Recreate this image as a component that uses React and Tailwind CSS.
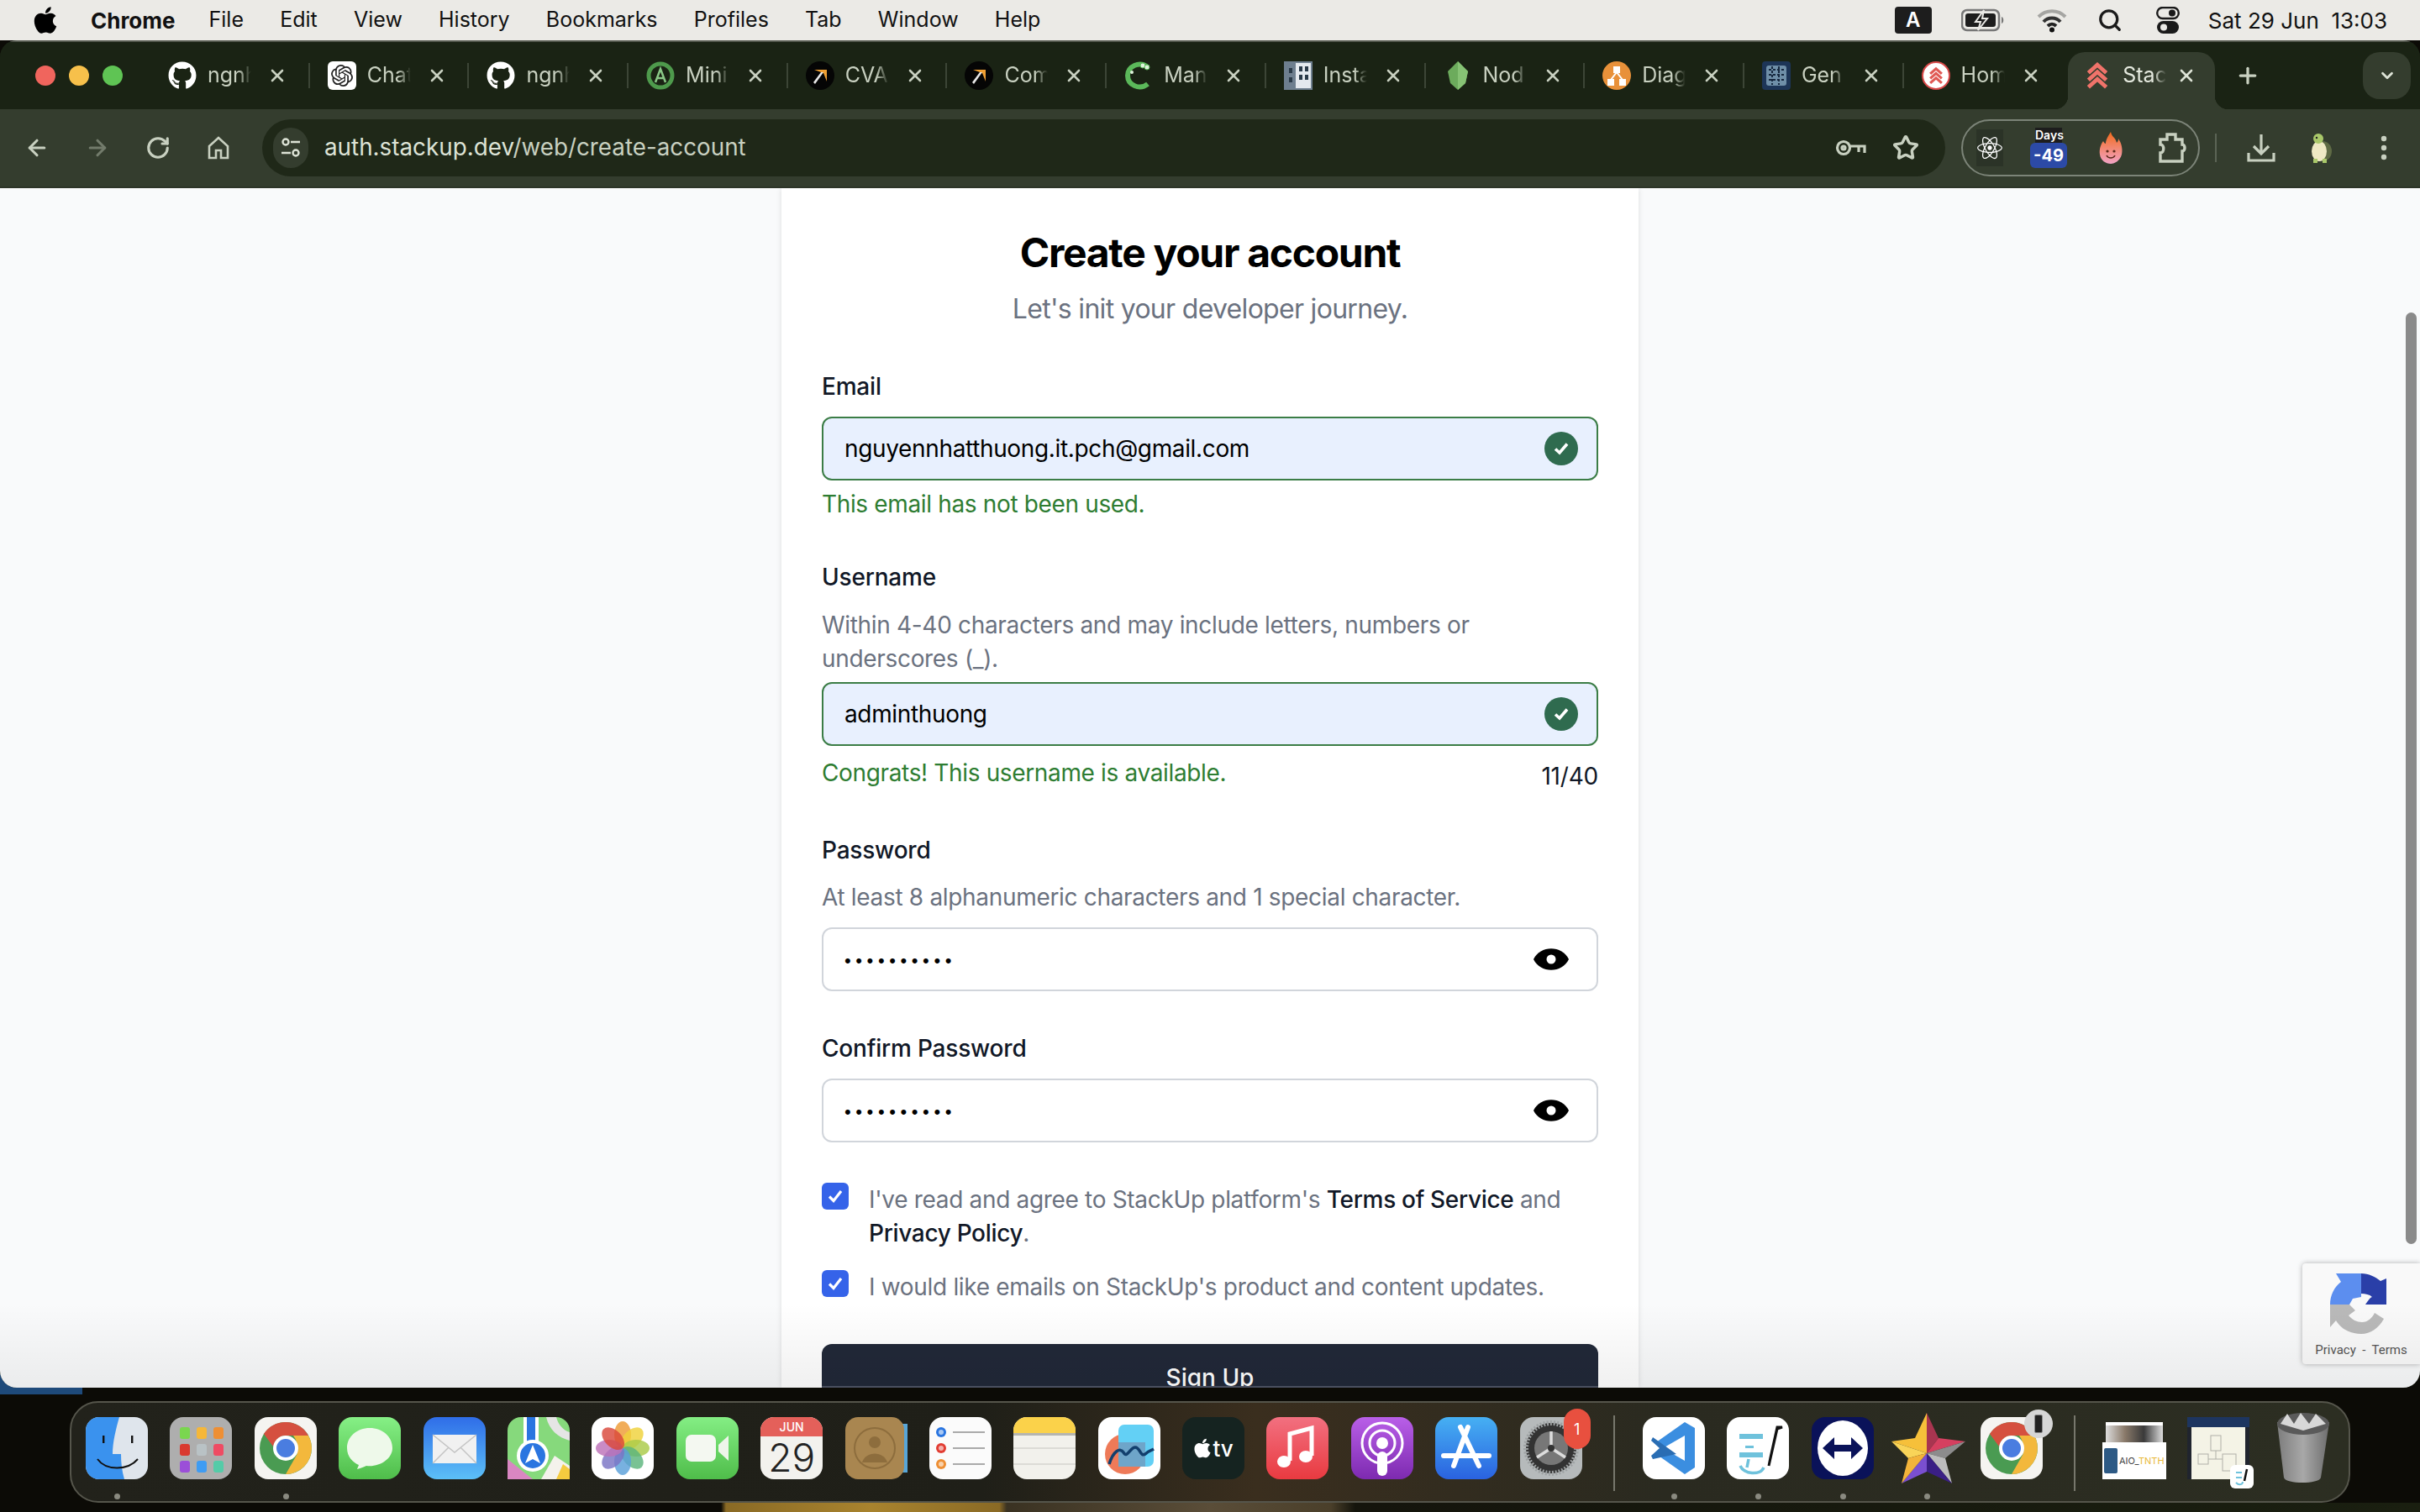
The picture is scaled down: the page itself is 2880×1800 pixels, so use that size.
import React from "react";
import { FaApple, FaGithub, FaReact } from "react-icons/fa";
import { SiOpenai } from "react-icons/si";
import { ArrowLeft, ArrowRight, RotateCw, Star, Plus, X, ChevronDown, Search } from "lucide-react";

const Chevrons = ({ c = "#f0736a", size = 34 }) => (
  <svg width={size} height={size} viewBox="0 0 32 32" fill="none" stroke={c} strokeWidth="4.5">
    <path d="M6 13 L16 4 L26 13" />
    <path d="M6 21 L16 12 L26 21" />
    <path d="M6 29 L16 20 L26 29" />
  </svg>
);

const favs = {
  github: <FaGithub className="w-[34px] h-[34px] text-white" />,
  gpt: <span className="w-[34px] h-[34px] rounded-[6px] bg-white flex items-center justify-center"><SiOpenai className="w-[26px] h-[26px] text-[#222]" /></span>,
  mini: (
    <svg width="34" height="34" viewBox="0 0 34 34" fill="none">
      <circle cx="17" cy="17" r="14" stroke="#4e9a4c" strokeWidth="5" />
      <path d="M11 25 L17 9 L23 25 M13 20 H21" stroke="#8ac887" strokeWidth="2.5" />
    </svg>
  ),
  cvat: (
    <svg width="34" height="34" viewBox="0 0 34 34">
      <circle cx="17" cy="17" r="17" fill="#050505" />
      <path d="M10 10 H25 V24 L21 14 Z" fill="#f0a033" />
      <path d="M21 13 L11 27 L9 25 L18 13 Z" fill="#e8e8e8" />
    </svg>
  ),
  man: (
    <svg width="34" height="34" viewBox="0 0 34 34" fill="none">
      <path d="M28 7 C18 -1 4 6 4 17 C4 28 18 35 28 27" stroke="#5bb85a" strokeWidth="6" />
      <circle cx="22" cy="5" r="3" fill="#dff3dc" stroke="#5bb85a" />
      <circle cx="27" cy="7" r="3" fill="#dff3dc" stroke="#5bb85a" />
      <circle cx="9" cy="13" r="2" fill="#dff3dc" />
    </svg>
  ),
  insta: (
    <svg width="34" height="34" viewBox="0 0 34 34">
      <rect width="34" height="34" fill="#6e7f8f" />
      <rect x="14" y="2" width="18" height="30" fill="#e4e9ee" />
      <rect x="6" y="8" width="4" height="6" fill="#2a3a48" />
      <rect x="6" y="19" width="4" height="6" fill="#2a3a48" />
      <rect x="18" y="6" width="4" height="6" fill="#2a3a48" />
      <rect x="25" y="6" width="4" height="6" fill="#2a3a48" />
      <rect x="18" y="16" width="4" height="6" fill="#2a3a48" />
      <rect x="25" y="16" width="4" height="6" fill="#2a3a48" />
    </svg>
  ),
  node: (
    <svg width="34" height="34" viewBox="0 0 34 34">
      <path d="M17 0 L29 12 L26 26 L17 34 L8 26 L5 12 Z" fill="#6cab5c" />
      <path d="M17 0 L29 12 L26 26 L17 34 Z" fill="#86c274" />
    </svg>
  ),
  diag: (
    <svg width="34" height="34" viewBox="0 0 34 34">
      <circle cx="17" cy="17" r="17" fill="#e8913a" />
      <rect x="13" y="6" width="8" height="8" fill="#fff" />
      <rect x="6" y="21" width="8" height="8" fill="#fff" />
      <rect x="20" y="21" width="8" height="8" fill="#fff" />
      <path d="M17 13 L10 22 M17 13 L24 22" stroke="#fff" strokeWidth="2" />
    </svg>
  ),
  gen: (
    <svg width="34" height="34" viewBox="0 0 34 34">
      <rect width="34" height="34" rx="4" fill="#1d3557" />
      <rect x="5" y="5" width="24" height="24" rx="3" fill="#6f8fa8" />
      <path d="M8 10 H26 M8 16 H26 M8 22 H26 M12 6 V28 M20 6 V28" stroke="#16283f" strokeWidth="2" strokeDasharray="3 2" />
    </svg>
  ),
  hom: <span className="w-[34px] h-[34px] rounded-full bg-white border-2 border-[#d94a4a] flex items-center justify-center"><Chevrons size={22} c="#e05a55" /></span>,
  stack: <Chevrons />,
};

const tabs = [
  ["github", "ngnh"],
  ["gpt", "Chat"],
  ["github", "ngnh"],
  ["mini", "Mini"],
  ["cvat", "CVA"],
  ["cvat", "Com"],
  ["man", "Man"],
  ["insta", "Insta"],
  ["node", "Nod"],
  ["diag", "Diag"],
  ["gen", "Gen"],
  ["hom", "Hom"],
];

const fadeCls = "ml-[13px] w-[54px] whitespace-nowrap text-[25px] [mask-image:linear-gradient(to_right,#000_68%,transparent_96%)]";

function Tab({ icon, title, last }) {
  return (
    <div className="relative flex items-center w-[189.7px] h-[56px] pl-[21px] shrink-0">
      <span className="w-[34px] h-[34px] shrink-0 flex items-center justify-center">{favs[icon]}</span>
      <span className={`${fadeCls} text-[#c8d0c0]`}>{title}</span>
      <X className="ml-[17px] w-[24px] h-[24px] text-[#c8d0c0]" strokeWidth={2.6} />
      {!last && <span className="absolute right-0 top-[13px] w-[2px] h-[30px] bg-[#3c4536]" />}
    </div>
  );
}

function MenuBar() {
  const items = ["File", "Edit", "View", "History", "Bookmarks", "Profiles", "Tab", "Window", "Help"];
  return (
    <div className="h-[48px] bg-[#ebeae6] flex items-center text-[25px] text-[#111] shrink-0 pl-[38px] pr-[39px]">
      <FaApple className="w-[32px] h-[36px] text-black" />
      <span className="ml-[38px] font-bold text-[26px]">Chrome</span>
      <div className="flex ml-[40px] gap-[43.2px]">
        {items.map((m) => <span key={m}>{m}</span>)}
      </div>
      <div className="ml-auto flex items-center">
        <span className="w-[44px] h-[32px] rounded-[4px] bg-[#1d1d1d] text-white text-[24px] font-semibold flex items-center justify-center">A</span>
        <svg className="ml-[35px]" width="52" height="28" viewBox="0 0 52 28" fill="none">
          <rect x="1" y="2" width="44" height="24" rx="6" stroke="#777" strokeWidth="2.5" />
          <rect x="5" y="6" width="36" height="16" rx="3" fill="#1d1d1d" />
          <path d="M27 2 L17 16 H23 L20 26 L31 12 H25 Z" fill="#1d1d1d" stroke="#ebeae6" strokeWidth="2" />
          <path d="M48 10 C51 11 51 17 48 18 Z" fill="#777" />
        </svg>
        <svg className="ml-[38px]" width="36" height="30" viewBox="0 0 36 30" fill="none" strokeWidth="4">
          <path d="M2 11 C11 2 25 2 34 11" stroke="#a5a5a2" />
          <path d="M8 17 C13 11 23 11 28 17" stroke="#333" />
          <path d="M13 22 C16 19 20 19 23 22" stroke="#222" />
          <circle cx="18" cy="26.5" r="3" fill="#111" />
        </svg>
        <Search className="ml-[36px] w-[30px] h-[30px] text-[#1a1a1a]" strokeWidth={2.6} />
        <svg className="ml-[40px]" width="28" height="32" viewBox="0 0 28 32">
          <rect x="1.2" y="1" width="25.6" height="13" rx="6.5" fill="none" stroke="#1a1a1a" strokeWidth="2.4" />
          <circle cx="19" cy="7.5" r="4" fill="#1a1a1a" />
          <rect x="1" y="17" width="26" height="15" rx="7.5" fill="#1a1a1a" />
          <circle cx="9" cy="24.5" r="4" fill="#ebeae6" />
        </svg>
        <span className="ml-[34px] whitespace-pre text-[26px]">Sat 29 Jun  13:03</span>
      </div>
    </div>
  );
}

function TabStrip() {
  return (
    <div className="h-[82px] bg-[#1a2314] flex items-end shrink-0 pl-[42px] border-t-2 border-[#55594f]">
      <div className="flex items-center gap-[16px] h-[68px] pb-[12px] shrink-0">
        <span className="w-[24px] h-[24px] rounded-full bg-[#f0655d]" />
        <span className="w-[24px] h-[24px] rounded-full bg-[#f7c04b]" />
        <span className="w-[24px] h-[24px] rounded-full bg-[#5fc454]" />
      </div>
      <div className="flex items-start h-[68px] ml-[33px]">
        {tabs.map((t, i) => <Tab key={i} icon={t[0]} title={t[1]} last={i === tabs.length - 1} />)}
      </div>
      <div className="relative w-[175px] h-[68px] pb-[12px] bg-[#343d2e] rounded-t-[20px] flex items-center pl-[18px] ml-[6px] shrink-0">
        <span className="absolute left-[-16px] bottom-0 w-[16px] h-[16px] bg-[radial-gradient(circle_at_0_0,transparent_16px,#343d2e_16.5px)]" />
        <span className="absolute right-[-16px] bottom-0 w-[16px] h-[16px] bg-[radial-gradient(circle_at_100%_0,transparent_16px,#343d2e_16.5px)]" />
        <Chevrons />
        <span className={`${fadeCls} text-[#e4e9de]`}>Stac</span>
        <X className="ml-[10px] w-[24px] h-[24px] text-[#dde3d6]" strokeWidth={2.6} />
      </div>
      <div className="h-[68px] pb-[12px] flex items-center ml-[24px]">
        <Plus className="w-[30px] h-[30px] text-[#c8d0c0]" strokeWidth={2.6} />
      </div>
      <div className="mb-[12px] ml-[122px] w-[57px] h-[56px] rounded-[20px] bg-[#343d2e] flex items-center justify-center shrink-0">
        <ChevronDown className="w-[22px] h-[22px] text-[#dde3d6]" strokeWidth={3} />
      </div>
    </div>
  );
}

function Toolbar() {
  return (
    <div className="h-[94px] bg-[#343d2e] border-b-2 border-[#2d3528] flex items-center shrink-0 pl-[29px]">
      <ArrowLeft className="w-[30px] h-[30px] text-[#c8d0c0]" strokeWidth={2.5} />
      <ArrowRight className="ml-[42px] w-[30px] h-[30px] text-[#727b6b]" strokeWidth={2.5} />
      <RotateCw className="ml-[42px] w-[30px] h-[30px] text-[#c8d0c0]" strokeWidth={2.5} />
      <svg className="ml-[42px]" width="30" height="30" viewBox="0 0 30 30" fill="none" stroke="#c8d0c0" strokeWidth="2.6">
        <path d="M4 13 L15 3 L26 13 V27 H18 V18 H12 V27 H4 Z" />
      </svg>
      <div className="ml-[37px] w-[2003px] h-[68px] bg-[#1f2818] rounded-full flex items-center pl-[13px] pr-[31px]">
        <span className="w-[42px] h-[48px] rounded-full bg-[#343d2e] flex items-center justify-center">
          <svg width="26" height="26" viewBox="0 0 26 26" fill="none" stroke="#dde3d6" strokeWidth="2.4">
            <circle cx="7" cy="6" r="3.5" />
            <path d="M13 6 H24 M2 19 H13" />
            <circle cx="19" cy="19" r="3.5" />
          </svg>
        </span>
        <span className="ml-[19px] text-[27.8px] text-[#dde3d6]">auth.stackup.dev<span className="text-[#c8d0c0]">/web/create-account</span></span>
        <svg className="ml-auto" width="38" height="24" viewBox="0 0 38 24" fill="none" stroke="#c8d0c0" strokeWidth="3.2">
          <circle cx="10" cy="12" r="7.5" />
          <circle cx="10" cy="12" r="2" />
          <path d="M17 10 H35 V18 M28 10 V17" />
        </svg>
        <Star className="ml-[30px] w-[32px] h-[32px] text-[#c8d0c0]" strokeWidth={2.6} />
      </div>
      <div className="ml-[19px] w-[284px] h-[68px] rounded-full border-2 border-[#7c8478] flex items-center pl-[16px]">
        <span className="w-[32px] h-[44px] bg-[#2b3327] flex items-center justify-center shrink-0">
          <FaReact className="w-[30px] h-[34px] text-white" />
        </span>
        <div className="ml-[31px] w-[46px] flex flex-col items-center shrink-0">
          <span className="w-[32px] h-[18px] bg-[#1d1d1d] text-white text-[14px] font-semibold leading-[18px] text-center">Days</span>
          <span className="w-[44px] h-[30px] rounded-[6px] bg-[#2c4aa6] text-white text-[20px] font-bold leading-[30px] text-center">-49</span>
        </div>
        <svg className="ml-[36px] shrink-0" width="30" height="38" viewBox="0 0 30 38">
          <defs>
            <linearGradient id="fl" x1="0" y1="0" x2="0" y2="1">
              <stop offset="0" stopColor="#f26a1b" />
              <stop offset="1" stopColor="#f2a3c6" />
            </linearGradient>
          </defs>
          <path d="M15 0 C16 6 21 7 22 13 C24 11 24 9 24 8 C29 15 29 23 28 27 C26 34 20 38 15 38 C9 38 3 34 2 27 C1 21 3 15 6 11 C7 13 8 14 9 14 C9 9 12 5 15 0 Z" fill="url(#fl)" />
          <circle cx="11" cy="23" r="1.6" fill="#5a2a1a" />
          <circle cx="19" cy="23" r="1.6" fill="#5a2a1a" />
          <path d="M10 28 C12 32 18 32 20 28" fill="none" stroke="#5a2a1a" strokeWidth="1.6" />
        </svg>
        <svg className="ml-[41px] shrink-0" width="34" height="36" viewBox="0 0 34 36" fill="none" stroke="#c8d0c0" strokeWidth="3.4">
          <path d="M3 8 H11 V2 H21 V8 H29 V14 C33 14 33 22 29 22 V34 H3 V24 C8 24 8 14 3 14 Z" />
        </svg>
      </div>
      <span className="ml-[18px] w-[2px] h-[34px] bg-[#5b6455]" />
      <svg className="ml-[36px]" width="34" height="36" viewBox="0 0 34 36" fill="none" stroke="#c8d0c0" strokeWidth="3.2">
        <path d="M17 2 V24 M8 16 L17 25 L26 16" />
        <path d="M2 24 V33 H32 V24" />
      </svg>
      <svg className="ml-[38px]" width="30" height="36" viewBox="0 0 30 36">
        <ellipse cx="18" cy="22" rx="11" ry="12" fill="#5f6b45" />
        <ellipse cx="14" cy="22" rx="9" ry="12" fill="#efe9c4" />
        <circle cx="13" cy="7" r="6" fill="#a9c86a" />
        <circle cx="11" cy="6" r="1.2" fill="#222" />
        <rect x="7" y="31" width="5" height="5" fill="#a9c86a" />
        <rect x="18" y="31" width="5" height="5" fill="#a9c86a" />
      </svg>
      <svg className="ml-[57px]" width="8" height="30" viewBox="0 0 8 30" fill="#c8d0c0">
        <circle cx="4" cy="4" r="3.2" /><circle cx="4" cy="15" r="3.2" /><circle cx="4" cy="26" r="3.2" />
      </svg>
    </div>
  );
}

const CheckBadge = () => (
  <span className="w-[40px] h-[40px] rounded-full bg-[#2f6b4f] flex items-center justify-center shrink-0">
    <svg width="20" height="18" viewBox="0 0 20 18" fill="none" stroke="#fff" strokeWidth="3.6">
      <path d="M3 9.5 L8 14 L17 3.5" />
    </svg>
  </span>
);

const Eye = () => (
  <svg width="42" height="28" viewBox="0 0 42 28" className="shrink-0">
    <path d="M0 14 C8 -3 34 -3 42 14 C34 31 8 31 0 14 Z" fill="#000" />
    <circle cx="21" cy="14" r="5.5" fill="#fff" />
  </svg>
);

const labelCls = "block text-[28px] leading-[40px] font-medium tracking-[-0.2px] text-[#111827]";
const helpCls = "text-[28px] leading-[40px] tracking-[-0.32px] text-[#6b7280]";
const okCls = "text-[28px] leading-[40px] tracking-[-0.35px] text-[#2e7d32]";

function OkInput({ value }) {
  return (
    <div className="h-[76px] rounded-[12px] border-2 border-[#3b7d46] bg-[#e8f0fe] flex items-center pl-[25px] pr-[22px] text-[28px] tracking-[-0.35px] text-black">
      <span>{value}</span>
      <span className="ml-auto"><CheckBadge /></span>
    </div>
  );
}

function PwInput() {
  return (
    <div className="h-[76px] rounded-[12px] border-2 border-[#d1d5db] bg-white flex items-center pl-[25px] pr-[33px] text-black">
      <span className="pt-[3px] text-[22px] tracking-[5.6px] font-['Liberation_Sans',sans-serif]">••••••••••</span>
      <span className="ml-auto flex"><Eye /></span>
    </div>
  );
}

const Box = () => (
  <span className="w-[32px] h-[32px] rounded-[6px] bg-[#3563e9] flex items-center justify-center shrink-0">
    <svg width="22" height="20" viewBox="0 0 22 20" fill="none" stroke="#fff" strokeWidth="3.2">
      <path d="M4 10.5 L9 15.5 L18 4" />
    </svg>
  </span>
);

function Page() {
  return (
    <div className="relative flex-1 min-h-0 overflow-hidden bg-[#f9fafb] font-['Inter',sans-serif]">
      <div className="mx-auto w-[1020px] h-full bg-white shadow-[0_0_6px_rgba(0,0,0,0.12)] px-[48px]">
        <h1 className="pt-[47px] text-center text-[48px] leading-[60px] font-bold tracking-[-1.3px] text-black">Create your account</h1>
        <p className="mt-[15px] text-center text-[32px] leading-[44px] tracking-[-0.7px] text-[#6b7280]">Let's init your developer journey.</p>

        <label className={`${labelCls} mt-[50px]`}>Email</label>
        <div className="mt-[16px]"><OkInput value="nguyennhatthuong.it.pch@gmail.com" /></div>
        <p className={`mt-[8px] ${okCls}`}>This email has not been used.</p>

        <label className={`${labelCls} mt-[47px]`}>Username</label>
        <p className={`${helpCls} mt-[17px]`}>Within 4-40 characters and may include letters, numbers or underscores (_).</p>
        <div className="mt-[8px]"><OkInput value="adminthuong" /></div>
        <div className="mt-[12px] flex justify-between items-start">
          <span className={okCls}>Congrats! This username is available.</span>
          <span className="mt-[4px] text-[28px] leading-[40px] tracking-[-0.2px] text-[#111827]">11/40</span>
        </div>

        <label className={`${labelCls} mt-[48px]`}>Password</label>
        <p className={`${helpCls} mt-[16px]`}>At least 8 alphanumeric characters and 1 special character.</p>
        <div className="mt-[16px]"><PwInput /></div>

        <label className={`${labelCls} mt-[48px]`}>Confirm Password</label>
        <div className="mt-[16px]"><PwInput /></div>

        <div className="mt-[48px] flex gap-[24px]">
          <Box />
          <p className={helpCls}>I've read and agree to StackUp platform's <span className="font-medium text-[#111827]">Terms of Service</span> and <span className="font-medium text-[#111827]">Privacy Policy</span>.</p>
        </div>
        <div className="mt-[24px] flex gap-[24px]">
          <Box />
          <p className={helpCls}>I would like emails on StackUp's product and content updates.</p>
        </div>
        <button className="mt-[48px] w-full h-[80px] rounded-[12px] bg-[#212838] text-white text-[28px] font-medium">Sign Up</button>
      </div>

      <div className="absolute right-[4px] top-[148px] w-[13px] h-[1109px] rounded-full bg-[#8a8a8a]" />
      <div className="absolute right-0 bottom-[28px] w-[140px] h-[120px] bg-[#f9f9f9] rounded-l-[4px] shadow-[0_0_6px_rgba(0,0,0,0.3)] flex flex-col items-center">
        <svg className="mt-[12px]" width="74" height="74" viewBox="0 0 74 74">
          <path d="M7 0 L37 0 V28 L27 30 L23 37 H0 C0 26 5 16 13 10 Z" fill="#5c8eef" />
          <path d="M37 0 C46 0 54 4 60 9 L67 6 V37 H42 C45 33 47 29 50 28 C47 25 42 24 37 24 Z" fill="#2a3fa8" />
          <path d="M0 37 H23 L30 44 L22 50 C26 55 32 58 38 58 C45 58 50 53 53 47 L64 54 C58 65 48 72 37 72 C24 72 13 66 7 56 L0 64 Z" fill="#b9b9b9" />
        </svg>
        <span className="mt-[6px] text-[15px] text-[#555] font-['Roboto',sans-serif] whitespace-pre">Privacy  -  Terms</span>
      </div>
      <div className="absolute left-0 right-0 bottom-0 h-[100px] bg-gradient-to-b from-transparent to-[rgba(0,0,0,0.06)] pointer-events-none" />
      <div className="absolute left-[978px] w-[924px] bottom-0 h-[2px] bg-[#4a5060]" />
    </div>
  );
}

const Pie = () => (
  <svg width="74" height="74" viewBox="0 0 74 74">
    <rect width="74" height="74" rx="16" fill="#f5f4f1" />
    <circle cx="37" cy="37" r="31" fill="#4a9b52" />
    <path d="M37 6 A31 31 0 0 1 64 22 H37 C29 22 24 28 22 35 L11 20 C17 11 26 6 37 6 Z" fill="#d5503f" />
    <path d="M64 22 A31 31 0 0 1 37 68 L49 47 C53 41 52 30 46 22 Z" fill="#f3b83c" />
    <circle cx="37" cy="37" r="15" fill="#fff" />
    <circle cx="37" cy="37" r="11" fill="#4a7de0" />
  </svg>
);

const dockIcons = [
  { dot: true, el: (
    <svg width="74" height="74" viewBox="0 0 74 74">
      <rect width="74" height="74" rx="16" fill="#dfe5ec" />
      <path d="M16 0 H40 C36 14 32 30 32 44 H42 C42 54 43 64 46 74 H16 C7 74 0 67 0 58 V16 C0 7 7 0 16 0 Z" fill="#3a92ee" />
      <path d="M14 50 C24 64 50 64 62 50" fill="none" stroke="#111" strokeWidth="2" />
      <rect x="20" y="22" width="2.4" height="9" fill="#111" />
      <rect x="54" y="22" width="2.4" height="9" fill="#111" />
    </svg>
  )},
  { el: (
    <svg width="74" height="74" viewBox="0 0 74 74">
      <rect width="74" height="74" rx="16" fill="#aeaeae" />
      {[["#7ad64f",12],["#f5b73a",32],["#ee8f34",52]].map(([c,x],i)=><rect key={i} x={x} y="12" width="12" height="14" rx="3" fill={c} />)}
      {[["#d93a30",12],["#b9c2c5",32],["#ef4b63",52]].map(([c,x],i)=><rect key={i} x={x} y="32" width="12" height="14" rx="3" fill={c} />)}
      {[["#9b4fd8",12],["#3f9cf2",32],["#55cba8",52]].map(([c,x],i)=><rect key={i} x={x} y="52" width="12" height="14" rx="3" fill={c} />)}
    </svg>
  )},
  { dot: true, el: <Pie /> },
  { el: (
    <svg width="74" height="74" viewBox="0 0 74 74">
      <defs><linearGradient id="g1" x1="0" y1="0" x2="0" y2="1"><stop offset="0" stopColor="#86f086" /><stop offset="1" stopColor="#4fbd4a" /></linearGradient></defs>
      <rect width="74" height="74" rx="16" fill="url(#g1)" />
      <path d="M37 13 C22 13 10 23 10 37 C10 47 17 54 24 57 L22 62 C27 61 30 59 33 58 C48 60 64 50 64 37 C64 23 52 13 37 13 Z" fill="#eef9ea" />
    </svg>
  )},
  { el: (
    <svg width="74" height="74" viewBox="0 0 74 74">
      <defs><linearGradient id="g2" x1="0" y1="0" x2="0" y2="1"><stop offset="0" stopColor="#2f6de8" /><stop offset="1" stopColor="#5cc0f7" /></linearGradient></defs>
      <rect width="74" height="74" rx="16" fill="url(#g2)" />
      <rect x="11" y="21" width="52" height="34" rx="2" fill="#f1f1f1" />
      <path d="M11 21 L37 42 L63 21 M11 55 L30 36 M63 55 L44 36" fill="none" stroke="#c4c4c4" strokeWidth="1.5" />
    </svg>
  )},
  { el: (
    <svg width="74" height="74" viewBox="0 0 74 74">
      <rect width="74" height="74" rx="16" fill="#86d97c" />
      <path d="M0 50 L30 74 H0 Z" fill="#d986c2" />
      <path d="M40 74 H74 V58 L56 46 Z" fill="#f4f2ec" />
      <path d="M58 74 H74 V62 L66 56 Z" fill="#f4cb3f" />
      <path d="M46 0 C50 16 60 24 74 28 V18 C66 16 60 8 58 0 Z" fill="#e5e5e5" />
      <rect x="19" y="0" width="18" height="36" fill="#fff" />
      <rect x="23" y="0" width="10" height="36" fill="#2a75e0" />
      <circle cx="30" cy="46" r="19" fill="#fff" />
      <circle cx="30" cy="46" r="15" fill="#2a75e0" />
      <path d="M30 33 L39 55 L30 50 L21 55 Z" fill="#fff" />
    </svg>
  )},
  { el: (
    <svg width="74" height="74" viewBox="0 0 74 74">
      <rect width="74" height="74" rx="16" fill="#fff" />
      {[["#ee9b34",0],["#efd23a",45],["#a9cb48",90],["#5bb57c",135],["#5aa0d9",180],["#7a74c4",225],["#bd72b8",270],["#d9483a",315]].map(([c,a],i)=>(
        <ellipse key={i} cx="37" cy="21" rx="10" ry="16" fill={c} opacity="0.82" transform={`rotate(${a} 37 37)`} />
      ))}
    </svg>
  )},
  { el: (
    <svg width="74" height="74" viewBox="0 0 74 74">
      <defs><linearGradient id="g3" x1="0" y1="0" x2="0" y2="1"><stop offset="0" stopColor="#84ee84" /><stop offset="1" stopColor="#4fbd4a" /></linearGradient></defs>
      <rect width="74" height="74" rx="16" fill="url(#g3)" />
      <rect x="11" y="21" width="36" height="32" rx="7" fill="#f4f8f1" />
      <path d="M50 33 L62 22 V52 L50 41 Z" fill="#eef5ea" />
    </svg>
  )},
  { el: (
    <div className="w-[74px] h-[74px] rounded-[16px] bg-[#f3f2ee] overflow-hidden flex flex-col items-center font-['Inter',sans-serif]">
      <span className="w-full h-[23px] bg-[#e4605a] text-white text-[14px] font-medium text-center leading-[23px]">JUN</span>
      <span className="text-[46px] leading-[50px] font-light text-[#222]">29</span>
    </div>
  )},
  { el: (
    <svg width="74" height="74" viewBox="0 0 74 74">
      <rect x="66" y="8" width="8" height="58" fill="#58a6d8" />
      <rect width="70" height="74" rx="15" fill="#a98650" />
      <circle cx="35" cy="37" r="24" fill="none" stroke="#8d6d3d" strokeWidth="2" />
      <circle cx="35" cy="30" r="7" fill="#8d6d3d" />
      <path d="M20 54 C24 40 46 40 50 54" fill="#8d6d3d" />
    </svg>
  )},
  { el: (
    <svg width="74" height="74" viewBox="0 0 74 74">
      <rect width="74" height="74" rx="16" fill="#fbfbfb" />
      {[["#2a75e0",18],["#e23d33",37],["#ee8f34",56]].map(([c,y],i)=>(
        <g key={i}>
          <circle cx="14" cy={y} r="6" fill={c} />
          <circle cx="14" cy={y} r="3" fill="#fff" opacity="0.6" />
          <rect x="28" y={y-1} width="38" height="2" fill="#aaa" />
        </g>
      ))}
    </svg>
  )},
  { el: (
    <svg width="74" height="74" viewBox="0 0 74 74">
      <rect width="74" height="74" rx="16" fill="#f2f1ec" />
      <path d="M16 0 H58 C67 0 74 7 74 16 V19 H0 V16 C0 7 7 0 16 0 Z" fill="#fbd24a" />
      <rect y="19" width="74" height="3" fill="#b5b5b0" />
      <rect y="36" width="74" height="2" fill="#dcdbd6" />
      <rect y="55" width="74" height="2" fill="#dcdbd6" />
    </svg>
  )},
  { el: (
    <svg width="74" height="74" viewBox="0 0 74 74">
      <rect width="74" height="74" rx="16" fill="#fff" />
      <circle cx="32" cy="44" r="24" fill="#ee7a58" />
      <rect x="24" y="9" width="42" height="50" rx="7" fill="#63d0f5" />
      <rect x="24" y="30" width="32" height="29" fill="#6ea5c9" />
      <path d="M13 56 C18 40 26 36 30 42 C34 50 38 36 44 36 C50 36 50 48 56 44 C60 40 63 40 66 38" fill="none" stroke="#123f6d" strokeWidth="3.5" />
    </svg>
  )},
  { el: (
    <div className="w-[74px] h-[74px] rounded-[16px] bg-[#152320] flex items-center justify-center gap-[1px] text-white">
      <FaApple className="w-[22px] h-[26px]" />
      <span className="text-[26px] font-['Inter',sans-serif] font-medium">tv</span>
    </div>
  )},
  { el: (
    <svg width="74" height="74" viewBox="0 0 74 74">
      <defs><linearGradient id="g4" x1="0" y1="0" x2="0" y2="1"><stop offset="0" stopColor="#f27080" /><stop offset="1" stopColor="#e93a40" /></linearGradient></defs>
      <rect width="74" height="74" rx="16" fill="url(#g4)" />
      <path d="M28 52 V20 L54 13 V46" fill="none" stroke="#fff" strokeWidth="5" />
      <ellipse cx="21" cy="53" rx="8" ry="7" fill="#fff" />
      <ellipse cx="47" cy="47" rx="8" ry="7" fill="#fff" />
    </svg>
  )},
  { el: (
    <svg width="74" height="74" viewBox="0 0 74 74">
      <defs><linearGradient id="g5" x1="0" y1="0" x2="0" y2="1"><stop offset="0" stopColor="#b95fe8" /><stop offset="1" stopColor="#7d2ab0" /></linearGradient></defs>
      <rect width="74" height="74" rx="16" fill="url(#g5)" />
      <circle cx="37" cy="31" r="24" fill="none" stroke="#fff" strokeWidth="3" />
      <circle cx="37" cy="31" r="15" fill="none" stroke="#fff" strokeWidth="3" />
      <circle cx="37" cy="31" r="7" fill="#fff" />
      <rect x="31" y="41" width="12" height="29" rx="6" fill="#fff" />
    </svg>
  )},
  { el: (
    <svg width="74" height="74" viewBox="0 0 74 74">
      <defs><linearGradient id="g6" x1="0" y1="0" x2="0" y2="1"><stop offset="0" stopColor="#46b0f3" /><stop offset="1" stopColor="#2a62e0" /></linearGradient></defs>
      <rect width="74" height="74" rx="16" fill="url(#g6)" />
      <path d="M39 12 L22 58 M30 12 L52 58 M10 46 H64" stroke="#fff" strokeWidth="6" strokeLinecap="round" />
    </svg>
  )},
  { badge: "1", el: (
    <svg width="74" height="74" viewBox="0 0 74 74">
      <rect width="74" height="74" rx="16" fill="#b6babb" />
      <circle cx="37" cy="37" r="30" fill="#333" />
      <circle cx="37" cy="37" r="30" fill="none" stroke="#9ea2a3" strokeWidth="6" strokeDasharray="2 2" />
      <circle cx="37" cy="37" r="20" fill="#777" />
      <path d="M37 37 V17 M37 37 L20 48 M37 37 L54 48" stroke="#ddd" strokeWidth="3.5" />
      <circle cx="37" cy="37" r="4" fill="#333" />
    </svg>
  )},
  { sep: true },
  { dot: true, el: (
    <svg width="74" height="74" viewBox="0 0 74 74">
      <rect width="74" height="74" rx="16" fill="#fff" />
      <path d="M50 6 L62 13 V60 L50 68 L16 44 L24 37 L50 52 V22 L24 37 L16 30 Z" fill="#3b8ee0" />
      <path d="M12 24 L40 44 L12 50 L10 46 L20 37 L10 28 Z" fill="#2a6db3" />
    </svg>
  )},
  { dot: true, el: (
    <svg width="74" height="74" viewBox="0 0 74 74">
      <rect width="74" height="74" rx="16" fill="#fff" />
      <rect x="15" y="20" width="28" height="6" fill="#6fc2dc" />
      <rect x="22" y="34" width="10" height="3" fill="#6fc2dc" />
      <rect x="15" y="42" width="28" height="6" fill="#6fc2dc" />
      <path d="M60 14 L50 58 L52 48 L60 12 L66 12 Z" fill="#111" stroke="#111" strokeWidth="3" />
      <path d="M16 58 C20 68 40 70 44 60 M26 50 L24 60" fill="none" stroke="#6fc2dc" strokeWidth="3.5" />
    </svg>
  )},
  { dot: true, el: (
    <svg width="74" height="74" viewBox="0 0 74 74">
      <rect width="74" height="74" rx="16" fill="#0a1259" />
      <ellipse cx="37" cy="37" rx="30" ry="33" fill="#fff" />
      <path d="M13 37 L27 24 V33 H47 V24 L61 37 L47 50 V41 H27 V50 Z" fill="#0a1259" />
    </svg>
  )},
  { dot: true, el: (
    <svg width="100" height="84" viewBox="0 0 100 84" className="mt-[-5px] shrink-0">
      <path d="M50 0 L50 48 L8 34 L36 30 Z" fill="#f6c03a" />
      <path d="M50 0 L64 30 L50 48 Z" fill="#a83550" />
      <path d="M64 30 L96 34 L50 48 Z" fill="#d54060" />
      <path d="M96 34 L72 54 L50 48 Z" fill="#8c8c8c" />
      <path d="M72 54 L80 84 L50 48 Z" fill="#bdbdbd" />
      <path d="M50 48 L50 70 L80 84 Z" fill="#3a1f85" />
      <path d="M50 48 L50 70 L20 84 Z" fill="#7a4fd0" />
      <path d="M8 34 L28 54 L50 48 Z" fill="#f9d458" />
      <path d="M28 54 L20 84 L50 48 Z" fill="#f3b33a" />
    </svg>
  )},
  { chrome: true, el: <Pie /> },
  { sep: true },
  { el: (
    <div className="w-[74px] h-[74px] flex flex-col items-center justify-end">
      <span className="w-[68px] h-[24px] bg-[linear-gradient(90deg,#ddd,#8a7a6a,#3a3a3a,#ddd)] border-t-4 border-white" />
      <div className="w-[76px] h-[44px] bg-white flex items-center pl-[2px] gap-[2px] shrink-0">
        <span className="w-[16px] h-[30px] rounded-[2px] bg-[#2d5a85]" />
        <span className="text-[11px] text-[#444] whitespace-nowrap font-['Inter',sans-serif]">AIO_<span className="text-[#e8b93a]">TNTH</span></span>
      </div>
    </div>
  )},
  { el: (
    <div className="relative w-[74px] h-[74px] flex flex-col items-center">
      <span className="w-[74px] h-[12px] bg-[#1d3560]" />
      <div className="w-[74px] h-[62px] bg-[#f4f3e6] border-x-[5px] border-[#20242e] flex items-center justify-center">
        <svg width="50" height="46" viewBox="0 0 50 46" fill="none" stroke="#b0b0a8" strokeWidth="1"><rect x="1" y="24" width="12" height="12" /><rect x="16" y="2" width="12" height="18" /><rect x="30" y="24" width="16" height="20" /><path d="M13 30 H30 M22 20 V30" /></svg>
      </div>
      <span className="absolute right-[-5px] bottom-[-11px] w-[28px] h-[28px] rounded-[6px] bg-white flex items-center justify-center">
        <svg width="18" height="22" viewBox="0 0 18 22" fill="none"><path d="M2 6 H9 M2 12 H9 M2 18 C6 22 10 20 10 17" stroke="#6fc2dc" strokeWidth="2" /><path d="M15 2 L12 16" stroke="#111" strokeWidth="2.5" /></svg>
      </span>
    </div>
  )},
  { el: (
    <svg width="70" height="84" viewBox="0 0 70 84" className="mt-[-6px]">
      <defs><linearGradient id="g7" x1="0" y1="0" x2="1" y2="0"><stop offset="0" stopColor="#7d7d7d" /><stop offset="0.5" stopColor="#a8a8a8" /><stop offset="1" stopColor="#6d6d6d" /></linearGradient></defs>
      <path d="M4 12 L12 78 C14 86 54 86 56 78 L66 12 Z" fill="url(#g7)" />
      <ellipse cx="35" cy="14" rx="31" ry="13" fill="#5a5a5a" />
      <path d="M8 14 L16 2 L24 14 L32 1 L42 14 L50 2 L62 14 L35 22 Z" fill="#d8d8d8" />
    </svg>
  )},
];

function Dock() {
  return (
    <div className="ml-[83px] mt-[16px] w-[2714px] h-[121px] shrink-0 rounded-[34px] border-2 border-[#55554b] bg-[linear-gradient(90deg,#22221b_0%,#1f1f18_40%,#3a2e1e_52%,#2a2a20_70%,#2c2e22_100%)] flex items-start pl-[17px] pt-[17px]">
      {dockIcons.map((d, i) =>
        d.sep ? (
          <span key={i} className="w-[2px] h-[90px] bg-[#77776c] mt-[-2px] ml-[11px] mr-[33px] shrink-0" />
        ) : (
          <div key={i} className="relative w-[74px] mr-[26.4px] shrink-0 h-[96px] flex justify-center">
            <div className="h-[74px] flex justify-center">{d.el}</div>
            {d.dot && <span className="absolute left-[34px] bottom-[-2px] w-[7px] h-[7px] rounded-full bg-[#8a8a80]" />}
            {d.badge && <span className="absolute right-[-10px] top-[-10px] w-[32px] h-[48px] rounded-full bg-[#e8503f] text-white text-[18px] flex items-center justify-center font-['Inter',sans-serif]">{d.badge}</span>}
            {d.chrome && (
              <span className="absolute right-[-12px] top-[-9px] w-[34px] h-[34px] rounded-full bg-[#d6d6d6] flex items-center justify-center">
                <span className="w-[10px] h-[22px] bg-[#222] border border-[#888] rounded-[2px]" />
              </span>
            )}
          </div>
        )
      )}
    </div>
  );
}

export default function App() {
  return (
    <div className="relative w-[2880px] h-[1800px] overflow-hidden flex flex-col bg-[#0c0b06] font-['Inter',sans-serif]">
      <span className="absolute left-0 top-[1636px] w-[98px] h-[24px] bg-[#1e4a7a]" />
      <MenuBar />
      <div className="relative h-[1604px] shrink-0 rounded-[20px] overflow-hidden flex flex-col bg-[#1a2314]">
        <TabStrip />
        <Toolbar />
        <Page />
      </div>
      <Dock />
      <div className="flex-1 bg-[linear-gradient(90deg,#0c0b06_0%,#0c0b06_29.8%,#8a6a25_30%,#a8832e_36%,#8a6a25_41.3%,#3a3222_41.6%,#5a4d38_50%,#4a3f2a_55%,#14140c_56%,#1a1f10_100%)]" />
    </div>
  );
}
